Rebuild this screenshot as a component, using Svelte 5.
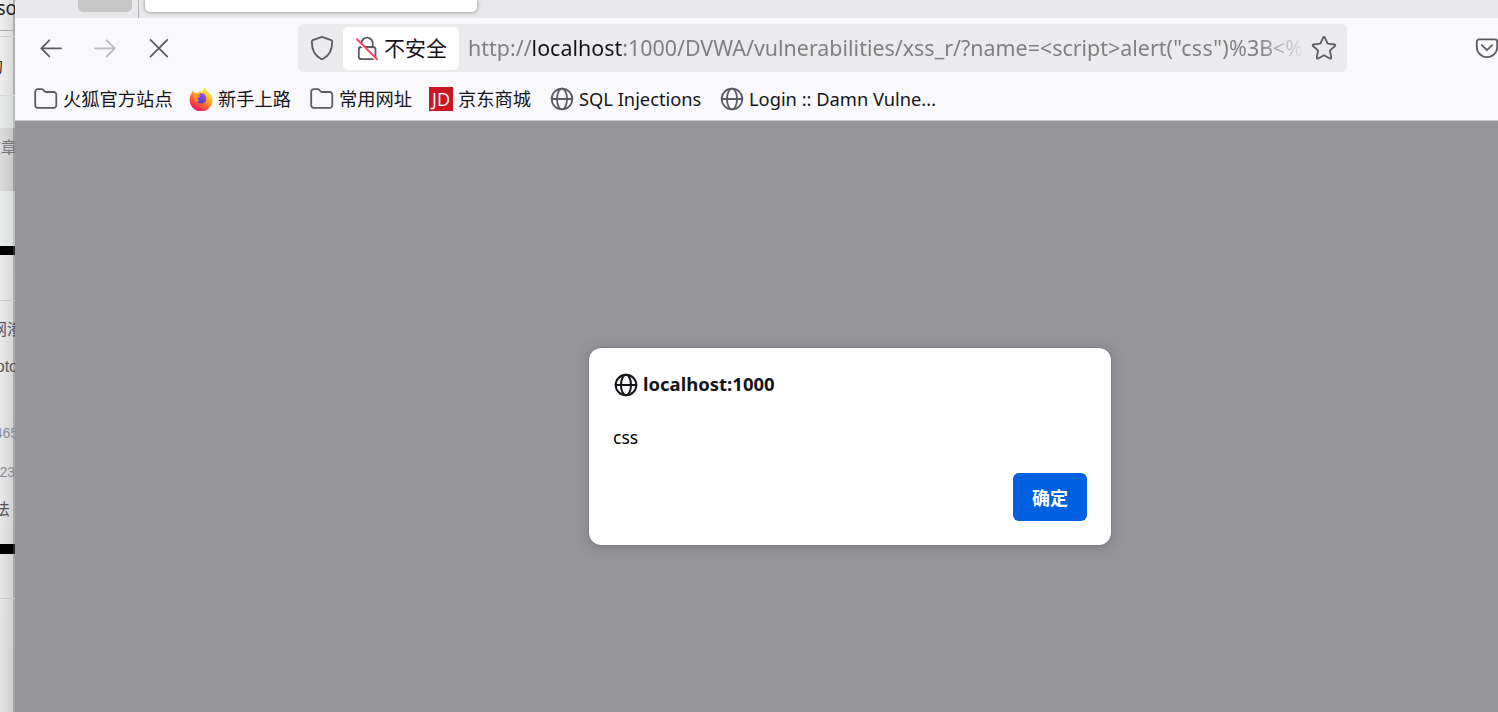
<script lang="ts">
  interface Bookmark {
    icon: "folder" | "firefox" | "jd" | "globe";
    label: string;
    width: number;
  }

  const bookmarks: Bookmark[] = [
    { icon: "folder", label: "火狐官方站点", width: 109 },
    { icon: "firefox", label: "新手上路", width: 75 },
    { icon: "folder", label: "常用网址", width: 73 },
    { icon: "jd", label: "京东商城", width: 75 },
    { icon: "globe", label: "SQL Injections", width: 124 },
    { icon: "globe", label: "Login :: Damn Vulne...", width: 190 },
  ];

  // Slices of the page that sits behind the browser window,
  // under is how far the text runs beneath the window's edge
  const slices = [
    { kind: "title", text: "so", height: 30, under: 2 },
    { kind: "rule", text: "", height: 7, under: 0 },
    { kind: "tab", text: "的", height: 58, under: 1 },
    { kind: "bar", text: "", height: 33, under: 0 },
    { kind: "menu", text: "文章", height: 63, under: 2 },
    { kind: "pale", text: "", height: 55, under: 0 },
    { kind: "black", text: "", height: 9, under: 0 },
    { kind: "blank", text: "", height: 45, under: 0 },
    { kind: "link line", text: "网渗", height: 56, under: 8 },
    { kind: "text", text: "oto", height: 22, under: 3 },
    { kind: "blank", text: "", height: 44, under: 0 },
    { kind: "num", text: "465", height: 22, under: 3 },
    { kind: "num second", text: "123", height: 56, under: 0 },
    { kind: "text last", text: "法", height: 20, under: 0 },
    { kind: "blank", text: "", height: 24, under: 0 },
    { kind: "black", text: "", height: 10, under: 0 },
    { kind: "blank", text: "", height: 44, under: 0 },
    { kind: "blank line", text: "", height: 114, under: 0 },
  ];
</script>

{#snippet globe()}
  <svg class="globe" viewBox="0 0 24 24" width="24" height="24">
    <circle cx="12" cy="12" r="10.3" />
    <ellipse cx="12" cy="12" rx="5" ry="10.3" />
    <path d="M1.7 12h20.6" />
  </svg>
{/snippet}

<div class="desktop">
  <aside class="behind">
    {#each slices as slice}
      <div class="slice {slice.kind}" style="height: {slice.height}px">
        <span style="margin-right: {-slice.under}px">{slice.text}</span>
      </div>
    {/each}
  </aside>

  <div class="browser">
    <div class="tabs">
      <div class="tab-stub"></div>
      <div class="tab-sep"></div>
      <div class="tab-active"></div>
    </div>

    <div class="toolbar">
      <div class="nav">
        <svg viewBox="0 0 24 24" width="24" height="24"><path d="M22 12.3H2.5M10.3 4.3l-8 8 8 8" /></svg>
        <svg class="off" viewBox="0 0 24 24" width="24" height="24"><path d="M2 12.3h19.5M13.7 4.3l8 8-8 8" /></svg>
        <svg viewBox="0 0 24 24" width="24" height="24"><path d="M3.5 3.8l16.8 16.8M20.3 3.8L3.5 20.6" /></svg>
      </div>

      <div class="urlbar">
        <svg class="shield" viewBox="0 0 24 26" width="24" height="26">
          <path d="M12 1.8L21.2 5.2Q22.2 5.6 22.2 6.8C22.2 14.4 19.2 20.8 12.8 24Q12 24.4 11.2 24C4.8 20.8 1.8 14.4 1.8 6.8Q1.8 5.6 2.8 5.2Z" />
        </svg>
        <div class="insecure">
          <svg viewBox="0 0 24 26" width="24" height="26">
            <path d="M6.5 10V8.2a5.6 5.6 0 0 1 11.2 0V12h.5a2.4 2.4 0 0 1 2.3 2.4v7.4a2.4 2.4 0 0 1-2.4 2.4H6.2a2.4 2.4 0 0 1-2.4-2.4v-7.4A2.4 2.4 0 0 1 6.2 12h11.5" />
            <path class="gap" d="M2 6l20 20" />
            <path class="slash" d="M2 4.2l20 20" />
          </svg>
          <span>不安全</span>
        </div>
        <div class="url">http://<b>localhost</b>:1000/DVWA/vulnerabilities/xss_r/?name=&lt;script&gt;alert<i>("css")</i>%3B&lt;%2Fscript&gt;</div>
        <svg class="star" viewBox="0 0 26 26" width="26" height="26">
          <path d="M12.1 2.6Q13 1 13.9 2.6L16.6 8.6L23.4 9.4Q25 9.8 23.9 11L18.9 15.6L20.2 22.5Q20.3 24.2 18.8 23.5L13 20.2L7.2 23.5Q5.7 24.2 5.8 22.5L7.1 15.6L2.1 11Q1 9.8 2.6 9.4L9.4 8.6Z" />
        </svg>
      </div>

      <svg class="pocket" viewBox="0 0 24 24" width="24" height="24">
        <path d="M4.2 3.4h15.6a2.4 2.4 0 0 1 2.4 2.4v5.2a10.2 10.2 0 0 1-20.4 0V5.8a2.4 2.4 0 0 1 2.4-2.4z" />
        <path d="M6.8 9.2l5.2 5 5.2-5" />
      </svg>
    </div>

    <div class="bookmarks">
      {#each bookmarks as item}
        <div class="bookmark">
          {#if item.icon === "folder"}
            <svg class="folder" viewBox="0 0 24 24" width="24" height="24">
              <path d="M1.2 18.2V4.8a2.6 2.6 0 0 1 2.6-2.6h3.9q1 0 1.7.8l1.2 1.3q.7.7 1.7.7h7.4a2.6 2.6 0 0 1 2.6 2.6v10.6a2.6 2.6 0 0 1-2.6 2.6H3.8a2.6 2.6 0 0 1-2.6-2.5z" />
            </svg>
          {:else if item.icon === "firefox"}
            <svg class="firefox" viewBox="0 0 24 24" width="24" height="24">
              <defs>
                <linearGradient id="flame" x1=".8" y1=".1" x2=".25" y2=".95">
                  <stop offset="0" stop-color="#fff14a" />
                  <stop offset=".35" stop-color="#ffb01f" />
                  <stop offset=".65" stop-color="#ff5a35" />
                  <stop offset="1" stop-color="#f5156c" />
                </linearGradient>
                <linearGradient id="core" x1=".7" y1="0" x2=".3" y2="1">
                  <stop offset="0" stop-color="#9a4cf2" />
                  <stop offset="1" stop-color="#4d3fc4" />
                </linearGradient>
              </defs>
              <path fill="url(#flame)" d="M2.4 6.7Q3 4.6 4.3 3.5q.1 1.7 1 2.6Q7 5.5 8.4 6.2 9.6 4.6 12 4.3q-.3 1 .7 1.8Q13.7 2 16.4.4q.3 2.4 2.6 4.3 1.5 1.2 2.1 3.1l.9-.8q1.5 3 1.4 5.8A11.4 11.4 0 1 1 .7 11.6Q.9 8.7 2.4 6.7z" />
              <path fill="url(#core)" d="M8 8.6q2.4-.4 3.6-2.3 4.4 0 5.4 3.4 1.2 5-2.8 6.6-4.4 1.2-6.6-2.1z" />
              <path fill="#ff9828" d="M5.2 7.6q2.5.9 6.3.9-.4 1.3-2.9 2.2-.6 2.4 1.6 2.9-2 1.7-4.2.4-2.1-2.6-.8-6.4z" />
            </svg>
          {:else if item.icon === "jd"}
            <span class="jd">JD</span>
          {:else}
            {@render globe()}
          {/if}
          <span class="label" style="width: {item.width}px">{item.label}</span>
        </div>
      {/each}
    </div>

    <main class="content">
      <div class="dialog" role="alertdialog" aria-label="localhost:1000">
        <div class="origin">
          {@render globe()}
          <span>localhost:1000</span>
        </div>
        <p>css</p>
        <button>确定</button>
      </div>
    </main>
  </div>
</div>

<style>
  :global(body) {
    overflow: hidden;
  }

  .desktop {
    display: grid;
    grid-template-columns: 15px minmax(0, 1fr);
    height: 712px;
    font-family: "Noto Sans", "Noto Sans CJK SC", sans-serif;
    color: #15141a;
  }

  svg {
    display: block;
    flex: none;
    fill: none;
    stroke: #5b5b66;
    stroke-width: 1.8;
    stroke-linecap: round;
    stroke-linejoin: round;
  }

  .behind {
    overflow: hidden;
    background: linear-gradient(90deg, rgba(0, 0, 0, 0) 0, rgba(0, 0, 0, 0.09) 13px, rgba(0, 0, 0, 0.27) 13px), linear-gradient(#f0f0f0, #e4e4e4);
  }

  .slice {
    box-sizing: border-box;
    display: flex;
    align-items: center;
    justify-content: flex-end;
    overflow: hidden;
    white-space: nowrap;
    font-size: 16px;
    line-height: 22px;
    color: #555;
  }

  .slice.title {
    align-items: flex-start;
    font-size: 19px;
    line-height: 17px;
    color: #222;
  }

  .rule {
    border-top: 1px solid #aaa;
    border-bottom: 1px solid #ccc;
  }

  .slice.tab {
    padding-right: 13px;
    color: #222;
  }

  .bar {
    border-top: 1px solid #d5d5d5;
    background: rgba(215, 230, 225, 0.25);
  }

  .slice.menu {
    align-items: flex-start;
    padding-top: 8px;
    background: rgba(0, 0, 0, 0.07);
    color: #777;
  }

  .pale {
    background: rgba(225, 240, 237, 0.35);
  }

  .black {
    background: linear-gradient(90deg, #000 13px, #292929 13px);
  }

  .line {
    border-top: 1px solid #c8c8c8;
  }

  .slice.link {
    color: #4c5573;
  }

  .slice.text {
    font-family: "Liberation Sans", "Noto Sans CJK SC", sans-serif;
  }

  .slice.num {
    font-family: "Liberation Sans", sans-serif;
    font-size: 14px;
    color: #858994;
  }

  .slice.last {
    padding-right: 5px;
  }

  .browser {
    display: flex;
    flex-direction: column;
    overflow: hidden;
    background: #f9f9fb;
  }

  .tabs {
    display: flex;
    flex: none;
    height: 18px;
    background: #e9e9eb;
  }

  .tab-stub {
    width: 54px;
    height: 12px;
    margin-left: 63px;
    border-radius: 0 0 5px 5px;
    background: #c6c6c7;
  }

  .tab-sep {
    width: 1px;
    margin-left: 6px;
    background: #acacaf;
  }

  .tab-active {
    width: 332px;
    height: 12px;
    margin-left: 6px;
    border-radius: 0 0 5px 5px;
    background: #fff;
    box-shadow: 0 0 4px rgba(0, 0, 0, 0.45);
  }

  .toolbar {
    display: flex;
    align-items: center;
    flex: none;
    height: 60px;
  }

  .nav {
    display: flex;
    flex: none;
    gap: 30px;
    width: 259px;
    padding-left: 24px;
  }

  .off {
    opacity: 0.4;
  }

  .urlbar {
    display: flex;
    align-items: center;
    flex: none;
    width: 1049px;
    height: 48px;
    border-radius: 6px;
    background: #ebebed;
  }

  .shield {
    margin-left: 12px;
  }

  .insecure {
    box-sizing: border-box;
    display: flex;
    align-items: center;
    flex: none;
    gap: 5px;
    width: 116px;
    height: 43px;
    margin-left: 9px;
    padding-left: 12px;
    border-radius: 5px;
    background: #fff;
    font-size: 21px;
    white-space: nowrap;
  }

  .insecure span {
    padding-bottom: 2px;
  }

  .gap {
    stroke: #fff;
    stroke-width: 2;
  }

  .slash {
    stroke: #ff4466;
    stroke-width: 2;
  }

  .url {
    flex: none;
    width: 833px;
    margin-left: 9px;
    padding-bottom: 2px;
    overflow: hidden;
    font-size: 21.4px;
    letter-spacing: 0.02px;
    color: #808082;
    white-space: nowrap;
    mask-image: linear-gradient(90deg, #000 790px, transparent 838px);
  }

  .url b {
    font-weight: 400;
    color: #15141a;
  }

  .url i {
    font-style: normal;
    letter-spacing: 0.4px;
  }

  .star {
    margin-left: 10px;
  }

  .pocket {
    margin-left: 128px;
  }

  .bookmarks {
    display: flex;
    gap: 17px;
    flex: none;
    box-sizing: border-box;
    height: 43px;
    padding-left: 19px;
    border-bottom: 1px solid #ccccce;
  }

  .bookmark {
    display: flex;
    align-items: center;
    gap: 5px;
    height: 42px;
    font-size: 18.3px;
    white-space: nowrap;
  }

  .label {
    line-height: 26px;
    padding-bottom: 1px;
  }

  .jd {
    width: 24px;
    height: 24px;
    background: #c91623;
    color: #fff;
    font: 500 18px/25px "Open Sans", sans-serif;
    text-align: center;
  }

  .firefox {
    stroke: none;
  }

  .content {
    display: flex;
    align-items: flex-start;
    flex: 1;
    padding: 227px 0 0 574px;
    background: #969599;
  }

  .dialog {
    box-sizing: border-box;
    display: flex;
    flex-direction: column;
    width: 522px;
    height: 197px;
    padding: 24px;
    border-radius: 12px;
    background: #fff;
    box-shadow: 0 2px 14px rgba(58, 57, 68, 0.3), 0 0 1px rgba(0, 0, 0, 0.6);
  }

  .origin {
    display: flex;
    align-items: center;
    gap: 5px;
    height: 25px;
    padding-left: 1px;
    font-size: 18.5px;
    font-weight: 700;
  }

  .origin span {
    padding-bottom: 2px;
  }

  .origin .globe {
    stroke: #15141a;
    stroke-width: 2;
  }

  p {
    margin: 28px 0 0;
    font-size: 17.5px;
    line-height: 24px;
    color: #000;
  }

  button {
    align-self: flex-end;
    width: 74px;
    height: 48px;
    margin-top: 24px;
    padding: 0 0 1px;
    border: 0;
    border-radius: 6px;
    background: #0061e0;
    color: #fff;
    font: 700 18px "Noto Sans CJK SC", sans-serif;
  }
</style>
